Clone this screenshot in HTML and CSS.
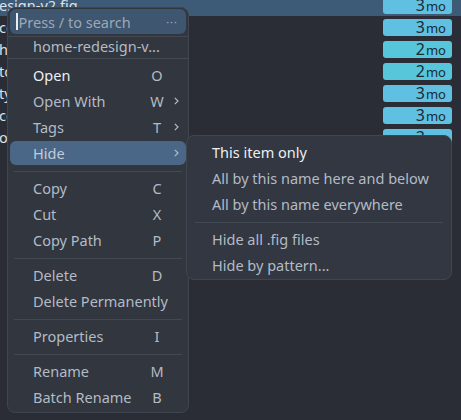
FILE: index.html
```html
<!DOCTYPE html>
<html lang="en">
<head>
  <meta charset="UTF-8" />
  <title>Files</title>
  <link rel="stylesheet" href="styles.css">
</head>
<body>
  <div class="list">
    <div class="row sel"><span class="name">esign-v2.fig</span><span class="badge">3<small>mo</small></span></div>
    <div class="row"><span class="name">components.fig</span><span class="badge">3<small>mo</small></span></div>
    <div class="row"><span class="name">header.fig</span><span class="badge teal">2<small>mo</small></span></div>
    <div class="row"><span class="name">tokens.fig</span><span class="badge teal">2<small>mo</small></span></div>
    <div class="row"><span class="name">typography.fig</span><span class="badge">3<small>mo</small></span></div>
    <div class="row"><span class="name">colors.fig</span><span class="badge">3<small>mo</small></span></div>
    <div class="row"><span class="name">onboarding.fig</span><span class="badge">3<small>mo</small></span></div>
  </div>

  <div class="menu">
    <div class="search"><span class="caret"></span><span class="hint">Press / to search</span><span class="dots">···</span></div>
    <div class="sep full"></div>
    <div class="label">home-redesign-v...</div>
    <div class="sep full last"></div>

    <div class="item bright"><span class="txt">Open</span><span class="key">O</span><span class="arrow"></span></div>
    <div class="item"><span class="txt">Open With</span><span class="key">W</span><span class="arrow"><svg width="5" height="8" viewBox="0 0 5 8"><polyline points="0.8,0.8 4,4 0.8,7.2" /></svg></span></div>
    <div class="item"><span class="txt">Tags</span><span class="key">T</span><span class="arrow"><svg width="5" height="8" viewBox="0 0 5 8"><polyline points="0.8,0.8 4,4 0.8,7.2" /></svg></span></div>
    <div class="item active"><span class="txt">Hide</span><span class="key"></span><span class="arrow"><svg width="5" height="8" viewBox="0 0 5 8"><polyline points="0.8,0.8 4,4 0.8,7.2" /></svg></span>
      <div class="submenu">
        <div class="item bright"><span class="txt">This item only</span></div>
        <div class="item"><span class="txt">All by this name here and below</span></div>
        <div class="item"><span class="txt">All by this name everywhere</span></div>
        <div class="sep"></div>
        <div class="item"><span class="txt">Hide all .fig files</span></div>
        <div class="item"><span class="txt">Hide by pattern...</span></div>
      </div>
    </div>
    <div class="sep"></div>

    <div class="item"><span class="txt">Copy</span><span class="key">C</span><span class="arrow"></span></div>
    <div class="item"><span class="txt">Cut</span><span class="key">X</span><span class="arrow"></span></div>
    <div class="item"><span class="txt">Copy Path</span><span class="key">P</span><span class="arrow"></span></div>
    <div class="sep"></div>

    <div class="item"><span class="txt">Delete</span><span class="key">D</span><span class="arrow"></span></div>
    <div class="item"><span class="txt">Delete Permanently</span><span class="key"></span><span class="arrow"></span></div>
    <div class="sep"></div>

    <div class="item"><span class="txt">Properties</span><span class="key">I</span><span class="arrow"></span></div>
    <div class="sep"></div>

    <div class="item"><span class="txt">Rename</span><span class="key">M</span><span class="arrow"></span></div>
    <div class="item"><span class="txt">Batch Rename</span><span class="key">B</span><span class="arrow"></span></div>
  </div>
</body>
</html>
```

FILE: styles.css
```css
body {
  margin: 0;
  background-color: #2a2d35;
  font-family: 'Noto Sans', sans-serif;
  font-size: 14.5px;
  color: #b3bbc6;
  overflow: hidden;
}
.list {
  margin-top: -6px;
}
.row {
  display: flex;
  align-items: center;
  justify-content: space-between;
  height: 22px;
  padding-right: 9px;
  color: #dde1e6;
}
.row.sel {
  background-color: #3d5a77;
}
.name {
  margin-left: -1px;
}
.badge {
  width: 69px;
  height: 17px;
  box-sizing: border-box;
  padding-right: 6px;
  border-radius: 3px;
  background-color: #5fc0e1;
  color: #1a2a37;
  text-align: right;
  font-size: 16px;
  line-height: 17px;
}
.badge.teal {
  background-color: #57c6da;
}
.badge small {
  font-size: 13px;
  margin-left: 1px;
}
.menu {
  position: absolute;
  left: 7px;
  top: 7px;
  width: 176px;
  padding: 1px 2px 1px;
  background-color: #31363f;
  border: 1px solid #40464f;
  border-radius: 8px;
  display: flex;
  flex-direction: column;
}
.search {
  display: flex;
  align-items: center;
  height: 25px;
  padding: 0 8px 0 6px;
  border-radius: 6px;
  background-color: #3e566f;
  color: #9ea8b4;
}
.caret {
  width: 1.5px;
  height: 17px;
  background-color: #e8ecf0;
  margin-right: 1px;
}
.hint {
  flex: 1;
}
.dots {
  font-size: 11px;
  color: #9fb0c2;
  letter-spacing: 1px;
}
.sep {
  height: 1px;
  margin: 4px 4px 4px 4px;
  background-color: #434953;
}
.sep.full {
  margin: 2px -2px 0;
}
.sep.full.last {
  margin: 0 -2px 4px;
}
.label {
  height: 21px;
  line-height: 19px;
  padding-left: 23px;
  white-space: nowrap;
}
.item {
  position: relative;
  display: flex;
  align-items: center;
  height: 24px;
  margin-bottom: 2px;
  padding-left: 23px;
  border-radius: 6px;
  white-space: nowrap;
  flex-shrink: 0;
}
.item.bright .txt {
  color: #eceff3;
}
.item.active {
  background-color: #4a6787;
  color: #c3cbd6;
}
.txt {
  flex: 1;
}
.key {
  width: 20px;
  text-align: center;
}
.arrow {
  width: 19px;
  display: flex;
  justify-content: center;
}
.arrow svg polyline {
  fill: none;
  stroke: #b3bbc6;
  stroke-width: 1.2;
}
.submenu {
  position: absolute;
  left: 176px;
  top: -6px;
  width: 260px;
  padding: 4px 2px 0;
  background-color: #323741;
  border: 1px solid #40464f;
  border-radius: 8px;
  color: #b3bbc6;
  display: flex;
  flex-direction: column;
}
.submenu .sep {
  margin: 4px 6px;
}
```
